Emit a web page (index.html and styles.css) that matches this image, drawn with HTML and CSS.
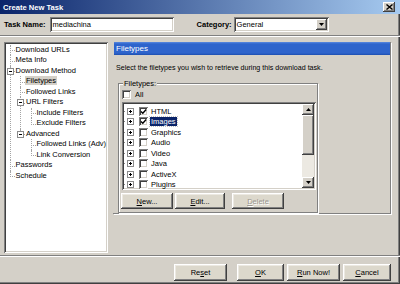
FILE: index.html
```html
<!DOCTYPE html>
<html lang="en">
<head>
  <meta charset="UTF-8">
  <title>Create New Task</title>
  <link rel="stylesheet" href="styles.css">
</head>
<body>
  <div class="window">
    <div class="titlebar">
      <span class="title">Create New Task</span>
      <span class="close">
        <svg width="7" height="6" viewBox="0 0 7 6"><path d="M0.5 0.5L6.5 5.5M6.5 0.5L0.5 5.5" stroke="#000" stroke-width="1.4"/></svg>
      </span>
    </div>

    <div class="toprow">
      <span class="lbl">Task Name:</span>
      <div class="field name">mediachina</div>
      <span class="lbl cat">Category:</span>
      <div class="field select">
        <span>General</span>
        <span class="drop"><svg width="5" height="3" viewBox="0 0 5 3"><path d="M0 0H5L2.5 3Z" fill="#000"/></svg></span>
      </div>
    </div>

    <div class="sep"></div>

    <div class="main">
      <ul class="tree">
        <li>Download URLs</li>
        <li>Meta Info</li>
        <li><span class="exp"></span>Download Method
          <ul>
            <li><span class="sel">Filetypes</span></li>
            <li>Followed Links</li>
            <li><span class="exp"></span>URL Filters
              <ul>
                <li>Include Filters</li>
                <li>Exclude Filters</li>
              </ul>
            </li>
            <li><span class="exp"></span>Advanced
              <ul>
                <li>Followed Links (Adv)</li>
                <li>Link Conversion</li>
              </ul>
            </li>
          </ul>
        </li>
        <li>Passwords</li>
        <li>Schedule</li>
      </ul>

      <div class="page">
        <div class="pagehead">Filetypes</div>
        <p class="desc">Select the filetypes you wish to retrieve during this download task.</p>

        <fieldset class="group">
          <legend>Filetypes:</legend>
          <div class="allrow"><span class="cb"></span>All</div>

          <div class="list">
            <div class="rows">
              <div class="row"><span class="plus"></span><span class="cb on"><svg width="7" height="7" viewBox="0 0 7 7"><path d="M1 3.5L2.8 5.3L6.2 1.5" stroke="#000" stroke-width="1.4" fill="none"/></svg></span><span class="txt">HTML</span></div>
              <div class="row"><span class="plus"></span><span class="cb on"><svg width="7" height="7" viewBox="0 0 7 7"><path d="M1 3.5L2.8 5.3L6.2 1.5" stroke="#000" stroke-width="1.4" fill="none"/></svg></span><span class="txt hl">Images</span></div>
              <div class="row"><span class="plus"></span><span class="cb"></span><span class="txt">Graphics</span></div>
              <div class="row"><span class="plus"></span><span class="cb"></span><span class="txt">Audio</span></div>
              <div class="row"><span class="plus"></span><span class="cb"></span><span class="txt">Video</span></div>
              <div class="row"><span class="plus"></span><span class="cb"></span><span class="txt">Java</span></div>
              <div class="row"><span class="plus"></span><span class="cb"></span><span class="txt">ActiveX</span></div>
              <div class="row"><span class="plus"></span><span class="cb"></span><span class="txt">Plugins</span></div>
            </div>
            <div class="vscroll">
              <span class="sbtn"><svg width="5" height="3" viewBox="0 0 5 3"><path d="M0 3H5L2.5 0Z" fill="#000"/></svg></span>
              <span class="thumb"></span>
              <span class="track"></span>
              <span class="sbtn"><svg width="5" height="3" viewBox="0 0 5 3"><path d="M0 0H5L2.5 3Z" fill="#000"/></svg></span>
            </div>
          </div>

          <div class="gbtns">
            <span class="btn b-new"><u>N</u>ew...</span>
            <span class="btn b-edit"><u>E</u>dit...</span>
            <span class="btn b-del off"><u>D</u>elete</span>
          </div>
        </fieldset>
      </div>
    </div>

    <div class="sep low"></div>

    <div class="btnrow">
      <span class="btn b-reset">Re<u>s</u>et</span>
      <span class="btn b-ok"><u>O</u>K</span>
      <span class="btn b-run"><u>R</u>un Now!</span>
      <span class="btn b-cancel"><u>C</u>ancel</span>
    </div>
  </div>
</body>
</html>
```

FILE: styles.css
```css
* {
  box-sizing: border-box;
}
body {
  margin: 0;
  background: #d4d0c8;
  font-family: "Liberation Sans", Arial, sans-serif;
  font-size: 7.5px;
  color: #000;
}
.window {
  width: 400px;
  height: 284px;
  display: flex;
  flex-direction: column;
  background: #d4d0c8;
  box-shadow: inset -1px -1px #404040, inset -2px -2px #808080;
}

/* title bar */
.titlebar {
  height: 14px;
  flex: none;
  display: flex;
  align-items: center;
  justify-content: space-between;
  padding: 0 5px 0 3px;
  background: linear-gradient(to right, #0a246a, #a6caf0);
  color: #fff;
  font-weight: bold;
  font-size: 7.6px;
}
.close {
  width: 12px;
  height: 10px;
  display: flex;
  align-items: center;
  justify-content: center;
  background: #d4d0c8;
  box-shadow: inset -1px -1px #404040, inset 1px 1px #fff, inset -2px -2px #808080;
}

/* task name row */
.toprow {
  flex: none;
  display: flex;
  align-items: center;
  height: 15px;
  margin-top: 3px;
  padding-left: 4px;
}
.lbl {
  font-weight: bold;
}
.cat {
  margin-left: 23px;
}
.field {
  height: 15px;
  background: #fff;
  display: flex;
  align-items: center;
  padding-left: 3px;
  box-shadow: inset 1px 1px #808080, inset -1px -1px #fff, inset 2px 2px #404040, inset -2px -2px #d4d0c8;
}
.name {
  width: 124px;
  margin-left: 4px;
}
.select {
  width: 95px;
  margin-left: 2px;
  justify-content: space-between;
  padding-right: 2px;
}
.drop {
  width: 11px;
  height: 11px;
  display: flex;
  align-items: center;
  justify-content: center;
  background: #d4d0c8;
  box-shadow: inset -1px -1px #404040, inset 1px 1px #fff, inset -2px -2px #808080;
}

.sep {
  flex: none;
  height: 2px;
  margin-top: 3px;
  border-top: 1px solid #808080;
  border-bottom: 1px solid #fff;
}
.sep.low {
  margin-top: 2px;
}

/* main area */
.main {
  flex: none;
  height: 211px;
  margin-top: 5px;
  display: flex;
  align-items: flex-start;
}

.tree {
  list-style: none;
  margin: 0 0 0 4px;
  padding: 2.75px 0 0 1px;
  width: 104px;
  height: 211px;
  overflow: hidden;
  background: #fff;
  box-shadow: inset 1px 1px #808080, inset -1px -1px #fff, inset 2px 2px #404040, inset -2px -2px #d4d0c8;
  line-height: 10.5px;
  white-space: nowrap;
}
.tree ul {
  list-style: none;
  margin: 0;
  padding: 0;
}
.tree li {
  position: relative;
  padding-left: 10.5px;
}
.tree li::before {
  content: '';
  position: absolute;
  left: 4.5px;
  top: 0;
  width: 4px;
  height: 5.5px;
  border-left: 1px dotted #a4a4a4;
  border-bottom: 1px dotted #a4a4a4;
}
.tree li::after {
  content: '';
  position: absolute;
  left: 4.5px;
  top: 5.5px;
  bottom: 0;
  border-left: 1px dotted #a4a4a4;
}
.tree li:last-child::after {
  display: none;
}
.exp {
  position: absolute;
  left: 1.5px;
  top: 2px;
  width: 7px;
  height: 7px;
  z-index: 1;
  border: 1px solid #8a8a8a;
  background: linear-gradient(#000, #000) center / 3px 1px no-repeat, #fff;
}
.sel {
  background: #d4d0c8;
  padding: 0 1px;
  margin-left: -1px;
}

.page {
  width: 278px;
  height: 172px;
  margin-left: 5px;
  border-right: 1px solid #808080;
  border-bottom: 1px solid #808080;
  box-shadow: 1px 1px #fff;
}
.pagehead {
  height: 13px;
  margin-left: 1px;
  padding-left: 2px;
  line-height: 13px;
  color: #fff;
  background: linear-gradient(#5a8ae0, #2e64cc 2px, #2e64cc 11px, #1c4eb0);
  font-size: 8px;
}
.desc {
  margin: 8px 0 0 3px;
  line-height: 10px;
  font-size: 7.1px;
  white-space: nowrap;
}

.group {
  width: 200px;
  margin: 5.5px 0 0 5px;
  padding: 0 0 3px 3px;
  border: 1px solid #808080;
  box-shadow: inset 1px 1px #fff, 1px 1px #fff;
  min-inline-size: 0;
}
.group legend {
  padding: 0 1px;
  margin-left: 1px;
  line-height: 9px;
  background: #d4d0c8;
}
.allrow {
  display: flex;
  align-items: center;
  height: 9px;
  margin-top: 2px;
}
.allrow .cb {
  margin-right: 4px;
}
.cb {
  width: 9px;
  height: 9px;
  flex: none;
  display: flex;
  align-items: center;
  justify-content: center;
  background: #fff;
  box-shadow: inset 1px 1px #808080, inset -1px -1px #fff, inset 2px 2px #404040, inset -2px -2px #d4d0c8;
}

.list {
  display: flex;
  width: 194px;
  height: 88px;
  margin-top: 3.5px;
  padding: 2px;
  background: #fff;
  box-shadow: inset 1px 1px #808080, inset -1px -1px #fff, inset 2px 2px #404040, inset -2px -2px #d4d0c8;
}
.rows {
  flex: 1;
  padding-top: 1.75px;
}
.row {
  display: flex;
  align-items: center;
  height: 10.5px;
  padding-left: 3px;
  background: linear-gradient(90deg, #8a8a8a 50%, transparent 50%) 0 5px / 2px 1px no-repeat;
}
.plus {
  width: 7px;
  height: 7px;
  flex: none;
  border: 1px solid #8a8a8a;
  background: linear-gradient(#000, #000) center / 3px 1px no-repeat, linear-gradient(#000, #000) center / 1px 3px no-repeat, #fff;
}
.row .cb {
  margin-left: 5px;
}
.txt {
  margin-left: 2px;
  padding: 0 1px;
  line-height: 9px;
}
.hl {
  background: #0a246a;
  color: #fff;
  outline: 1px dotted #c0c0c0;
}

.vscroll {
  width: 12px;
  display: flex;
  flex-direction: column;
  background: #ece9e2;
}
.sbtn {
  height: 11px;
  display: flex;
  align-items: center;
  justify-content: center;
  background: #d4d0c8;
  box-shadow: inset -1px -1px #404040, inset 1px 1px #fff, inset -2px -2px #808080;
}
.thumb {
  height: 40px;
  background: #d4d0c8;
  box-shadow: inset -1px -1px #404040, inset 1px 1px #fff, inset -2px -2px #808080;
}
.track {
  flex: 1;
}

.btn {
  display: flex;
  align-items: center;
  justify-content: center;
  background: #dcd8cc;
  box-shadow: inset -1px -1px #404040, inset 1px 1px #fff, inset -2px -2px #808080, inset 2px 2px #ece9e2;
}
.btn.off {
  color: #9a968e;
  text-shadow: 1px 1px #fff;
}
.gbtns {
  display: flex;
  height: 16px;
  margin-top: 3px;
  margin-left: -1px;
}
.b-new {
  width: 52px;
}
.b-edit {
  width: 50px;
  margin-left: 2px;
}
.b-del {
  width: 52px;
  margin-left: 7px;
}

.btnrow {
  flex: none;
  display: flex;
  justify-content: flex-end;
  height: 17px;
  margin-top: 7px;
  padding-right: 9px;
}
.b-reset {
  width: 53px;
}
.b-ok {
  width: 47px;
  margin-left: 10px;
}
.b-run {
  width: 53px;
  margin-left: 3px;
}
.b-cancel {
  width: 48px;
  margin-left: 3px;
}
```
